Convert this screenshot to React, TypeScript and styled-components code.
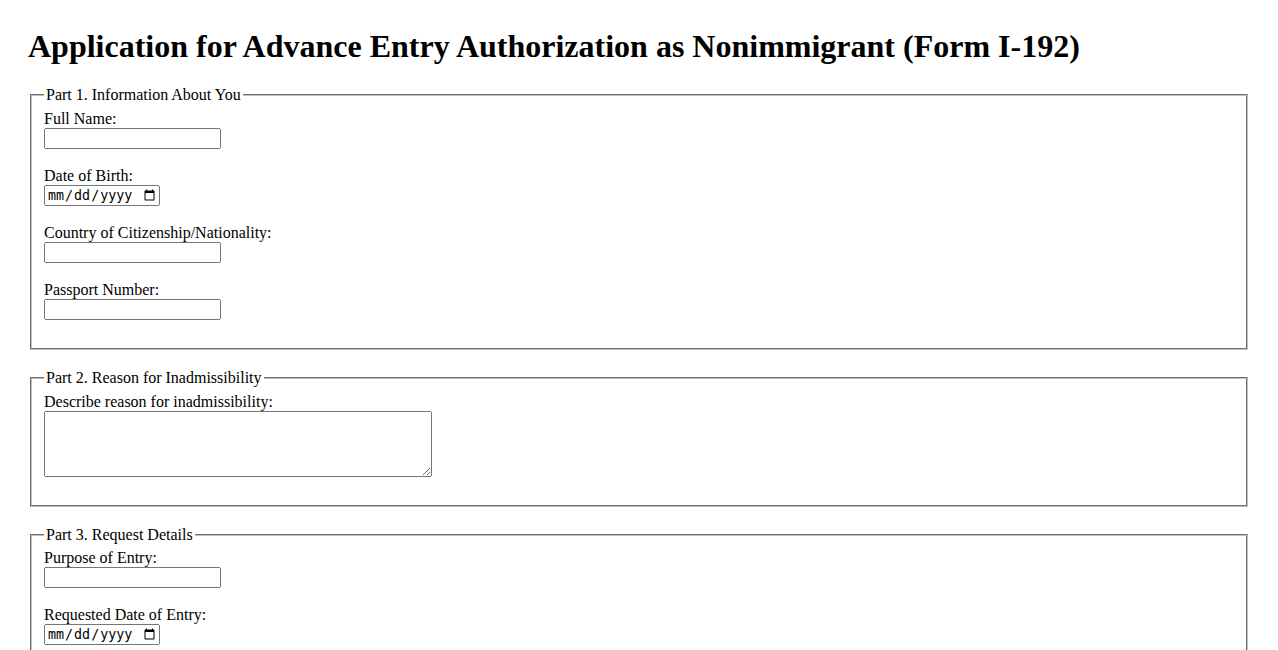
import styled, { createGlobalStyle } from 'styled-components'

const GlobalStyle = createGlobalStyle`
  html {
    scrollbar-width: none;
  }
  body {
    margin: 8px;
    background: #fff;
    color: #000;
    font-family: "Liberation Serif", "Times New Roman", serif;
    font-size: 16px;
  }
`

const Page = styled.div`
  padding: 20px;
`

const Title = styled.h1`
  margin: 0 0 21.44px;
  font-size: 32px;
  font-weight: bold;
`

const Section = styled.fieldset`
  margin: 0 2px 19px;
  padding: 0.35em 0.75em 0.625em;
  border: 2px groove rgb(192, 192, 192);
`

const Legend = styled.legend`
  padding: 0 2px;
`

const Field = styled.div`
  display: flex;
  flex-direction: column;
  align-items: flex-start;
  margin-bottom: 18px;
`

const Label = styled.label`
  display: block;
  line-height: normal;
`

const TextInput = styled.input`
  box-sizing: border-box;
  width: 177px;
  height: 21px;
  margin: 0;
  font: 13.333px "Liberation Sans", Arial, sans-serif;
`

const DateInput = styled.input`
  box-sizing: border-box;
  width: 116px;
  height: 21px;
  margin: 0;
  font: 13.333px "DejaVu Sans Mono", "Liberation Mono", monospace;
`

const TextArea = styled.textarea`
  box-sizing: border-box;
  width: 388px;
  height: 66px;
  margin: 0;
  font: 13.333px "Liberation Mono", monospace;
`

export default function App() {
  return (
    <>
      <GlobalStyle />
      <Page>
        <Title>Application for Advance Entry Authorization as Nonimmigrant (Form I-192)</Title>
        <form>
          <Section>
            <Legend>Part 1. Information About You</Legend>
            <Field>
              <Label htmlFor="fullName">Full Name:</Label>
              <TextInput id="fullName" type="text" />
            </Field>
            <Field>
              <Label htmlFor="dob">Date of Birth:</Label>
              <DateInput id="dob" type="date" />
            </Field>
            <Field>
              <Label htmlFor="country">Country of Citizenship/Nationality:</Label>
              <TextInput id="country" type="text" />
            </Field>
            <Field>
              <Label htmlFor="passport">Passport Number:</Label>
              <TextInput id="passport" type="text" />
            </Field>
          </Section>

          <Section>
            <Legend>Part 2. Reason for Inadmissibility</Legend>
            <Field>
              <Label htmlFor="reason">Describe reason for inadmissibility:</Label>
              <TextArea id="reason" rows={4} cols={50} />
            </Field>
          </Section>

          <Section>
            <Legend>Part 3. Request Details</Legend>
            <Field>
              <Label htmlFor="purpose">Purpose of Entry:</Label>
              <TextInput id="purpose" type="text" />
            </Field>
            <Field>
              <Label htmlFor="entryDate">Requested Date of Entry:</Label>
              <DateInput id="entryDate" type="date" />
            </Field>
            <Field>
              <Label htmlFor="portOfEntry">Port of Entry:</Label>
              <TextInput id="portOfEntry" type="text" />
            </Field>
          </Section>
        </form>
      </Page>
    </>
  )
}
